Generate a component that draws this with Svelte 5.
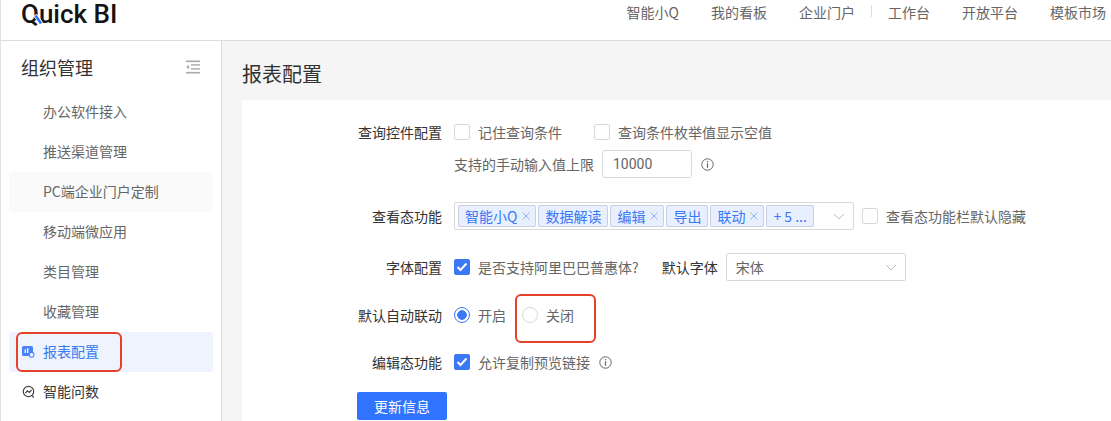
<script lang="ts">
	const topLinks = ['智能小Q', '我的看板', '企业门户', '工作台', '开放平台', '模板市场'];
	const menu = ['办公软件接入', '推送渠道管理', 'PC端企业门户定制', '移动端微应用', '类目管理', '收藏管理'];
	const tags = [
		{ text: '智能小Q', close: true },
		{ text: '数据解读', close: false },
		{ text: '编辑', close: true },
		{ text: '导出', close: false },
		{ text: '联动', close: true },
		{ text: '+ 5 ...', close: false }
	];
</script>

{#snippet info()}
	<svg class="info" width="13" height="13" viewBox="0 0 13 13" fill="none">
		<circle cx="6.5" cy="6.5" r="5.7" stroke="#666" stroke-width="1" />
		<rect x="5.9" y="3" width="1.2" height="1.3" fill="#666" />
		<rect x="5.9" y="5.3" width="1.2" height="4.4" fill="#666" />
	</svg>
{/snippet}

{#snippet chevron()}
	<svg class="chevron" width="12" height="7" viewBox="0 0 12 7" fill="none">
		<path d="M1 1l5 5 5-5" stroke="#bbb" stroke-width="1" />
	</svg>
{/snippet}

{#snippet check()}
	<span class="box on">
		<svg width="12" height="10" viewBox="0 0 12 10" fill="none">
			<path d="M1.5 5l3 3 6-6.5" stroke="#fff" stroke-width="2" />
		</svg>
	</span>
{/snippet}

<div class="page">
	<header class="topbar">
		<div class="logo">
			<span>Quick BI</span>
			<svg class="logo-mark" width="12" height="12" viewBox="0 0 12 12" fill="none">
				<path d="M2 1l6 8" stroke="#fff" stroke-width="4" />
				<path d="M2.5 1.5l5.5 8" stroke="#2f6fff" stroke-width="2.4" />
			</svg>
		</div>
		<nav class="links">
			{#each topLinks as link, i}
				<a class="link" class:split={i === 3} href="#top">{link}</a>
			{/each}
		</nav>
	</header>

	<div class="body">
		<aside class="sidebar">
			<div class="side-head">
				<span>组织管理</span>
				<svg width="14" height="14" viewBox="0 0 14 14" fill="#aaa">
					<rect x="0" y="0.5" width="14" height="1.6" />
					<rect x="5" y="4.2" width="9" height="1.4" />
					<rect x="5" y="8.2" width="9" height="1.4" />
					<rect x="0" y="11.9" width="14" height="1.6" />
					<path d="M0 7l3-2.2v4.4z" />
				</svg>
			</div>
			<ul class="menu">
				{#each menu as item, i}
					<li class="item" class:hover={i === 2}>{item}</li>
				{/each}
				<li class="item active">
					<svg class="item-icon" width="14" height="14" viewBox="0 0 14 14">
						<rect x="0" y="1" width="11" height="10" rx="1.5" fill="#4a84f8" />
						<rect x="2.6" y="4.5" width="1.3" height="3.5" fill="#fff" />
						<rect x="5" y="3.2" width="1.3" height="4.8" fill="#fff" />
						<circle cx="9.6" cy="9.8" r="2.4" fill="#eef3ff" stroke="#4a84f8" stroke-width="1.1" />
					</svg>
					报表配置
				</li>
				<li class="item top">
					<svg class="item-icon" width="14" height="14" viewBox="0 0 14 14" fill="none" stroke="#444" stroke-width="1.2">
						<circle cx="6.5" cy="6.5" r="5.2" />
						<path d="M3.4 8.2l2-2.4 2 1.6 2.2-2.6" />
						<path d="M9.8 10.4l2 2.2" />
					</svg>
					智能问数
				</li>
			</ul>
		</aside>

		<main class="content">
			<h1>报表配置</h1>
			<section class="card">
				<div class="row first">
					<div class="label">查询控件配置</div>
					<div class="field">
						<div class="line">
							<span class="box"></span><span class="opt">记住查询条件</span>
							<span class="box second"></span><span class="opt">查询条件枚举值显示空值</span>
						</div>
						<div class="line limit">
							<span>支持的手动输入值上限</span>
							<span class="input">10000</span>
							{@render info()}
						</div>
					</div>
				</div>

				<div class="row tags-row">
					<div class="label">查看态功能</div>
					<div class="field line">
						<div class="select multi">
							{#each tags as tag}
								<span class="tag">
									{tag.text}
									{#if tag.close}
										<svg class="close" width="8" height="8" viewBox="0 0 8 8" fill="none">
											<path d="M0.5 0.5l7 7M7.5 0.5l-7 7" stroke="#8fb0f5" stroke-width="1" />
										</svg>
									{/if}
								</span>
							{/each}
							{@render chevron()}
						</div>
						<span class="box hide-box"></span><span class="opt">查看态功能栏默认隐藏</span>
					</div>
				</div>

				<div class="row font-row">
					<div class="label">字体配置</div>
					<div class="field line">
						{@render check()}<span class="opt">是否支持阿里巴巴普惠体?</span>
						<span class="font-label">默认字体</span>
						<div class="select font">宋体{@render chevron()}</div>
					</div>
				</div>

				<div class="row radio-row">
					<div class="label">默认自动联动</div>
					<div class="field line">
						<span class="radio on"></span><span class="opt">开启</span>
						<span class="radio off"></span><span class="opt">关闭</span>
					</div>
				</div>

				<div class="row edit-row">
					<div class="label">编辑态功能</div>
					<div class="field line">
						{@render check()}<span class="opt">允许复制预览链接</span>
						{@render info()}
					</div>
				</div>

				<button class="save">更新信息</button>
			</section>
		</main>
	</div>
	<span class="mark radio-mark"></span>
	<span class="mark side-mark"></span>
</div>

<style>
	:global(body) {
		margin: 0;
		overflow: hidden;
	}

	.page {
		position: relative;
		width: 1111px;
		height: 421px;
		overflow: hidden;
		background: #f5f5f5;
		font-family: 'Noto Sans CJK SC', 'Noto Sans', sans-serif;
		font-size: 14px;
		color: #333;
		box-sizing: border-box;
		border-left: 1px solid #e2e2e2;
	}

	.topbar {
		height: 40px;
		background: #fff;
		border-bottom: 1px solid #dcdcdc;
		display: flex;
		align-items: flex-start;
		justify-content: space-between;
	}

	.logo {
		position: relative;
		margin-left: 20px;
		font-family: Roboto, sans-serif;
		font-size: 26px;
		font-weight: 500;
		line-height: 29px;
		color: #141414;
	}

	.logo-mark {
		position: absolute;
		left: 12px;
		top: 14px;
	}

	.links {
		display: flex;
		margin-right: 5px;
		line-height: 24px;
	}

	.link {
		color: #666;
		text-decoration: none;
		margin-left: 32px;
	}

	.split {
		position: relative;
		margin-left: 33px;
	}

	.split::before {
		content: '';
		position: absolute;
		left: -17px;
		top: 5px;
		width: 1px;
		height: 12px;
		background: #ddd;
	}

	.body {
		display: flex;
		height: 380px;
	}

	.sidebar {
		width: 220px;
		flex: none;
		background: #fff;
		border-right: 1px solid #dcdcdc;
	}

	.side-head {
		display: flex;
		align-items: center;
		justify-content: space-between;
		height: 51px;
		padding: 0 21px 0 20px;
		font-size: 18px;
		color: #333;
	}

	.menu {
		list-style: none;
		margin: 0;
		padding: 0 8px;
	}

	.item {
		position: relative;
		height: 40px;
		line-height: 38px;
		padding-left: 34px;
		color: #666;
		border-radius: 4px;
	}

	.hover {
		background: #fafafa;
	}

	.active {
		background: #eff3fe;
		color: #3a78f5;
	}

	.top {
		color: #333;
	}

	.item-icon {
		position: absolute;
		left: 13px;
		top: 13px;
	}

	.content {
		flex: 1;
		padding-left: 20px;
		min-width: 0;
	}

	h1 {
		margin: 0;
		height: 59px;
		line-height: 65px;
		font-size: 20px;
		font-weight: 400;
		color: #333;
	}

	.card {
		background: #fff;
		height: 330px;
		padding-top: 20px;
		box-sizing: border-box;
	}

	.row {
		display: flex;
	}

	.label {
		width: 200px;
		flex: none;
		text-align: right;
		color: #333;
		line-height: 24px;
		margin-right: 12px;
	}

	.line {
		display: flex;
		align-items: center;
		height: 24px;
		color: #666;
	}

	.opt {
		margin-left: 8px;
	}

	.box {
		width: 16px;
		height: 16px;
		flex: none;
		box-sizing: border-box;
		border: 1px solid #d9d9d9;
		border-radius: 2px;
		background: #fff;
		display: flex;
		align-items: center;
		justify-content: center;
	}

	.box.on {
		background: #3a78f5;
		border-color: #3a78f5;
	}

	.second {
		margin-left: 32px;
	}

	.limit {
		height: 28px;
		margin-top: 6px;
	}

	.input {
		width: 90px;
		height: 28px;
		box-sizing: border-box;
		margin-left: 8px;
		padding-left: 10px;
		line-height: 26px;
		border: 1px solid #d9d9d9;
		border-radius: 3px;
		font-family: Roboto, sans-serif;
	}

	.info {
		margin-left: 9px;
	}

	.tags-row {
		margin-top: 24px;
	}

	.tags-row .label {
		line-height: 28px;
	}

	.tags-row .line {
		height: 28px;
	}

	.select {
		position: relative;
		box-sizing: border-box;
		height: 28px;
		border: 1px solid #d9d9d9;
		border-radius: 2px;
		display: flex;
		align-items: center;
		background: #fff;
		color: #666;
	}

	.chevron {
		position: absolute;
		right: 8px;
		top: 10px;
	}

	.multi {
		width: 400px;
		padding-left: 3px;
		gap: 2px;
	}

	.tag {
		display: flex;
		align-items: center;
		height: 22px;
		box-sizing: border-box;
		padding: 0 6px;
		border: 1px solid #c6d0e2;
		border-radius: 2px;
		background: #e8f0ff;
		color: #3a78f5;
		white-space: nowrap;
	}

	.close {
		margin: 0 -1px 0 5px;
	}

	.hide-box {
		margin-left: 8px;
	}

	.font-row {
		margin-top: 25px;
	}

	.font-label {
		margin-left: 23px;
		color: #333;
	}

	.font {
		width: 180px;
		margin-left: 8px;
		padding-left: 9px;
	}

	.radio-row {
		margin-top: 24px;
	}

	.radio {
		width: 16px;
		height: 16px;
		box-sizing: border-box;
		border-radius: 50%;
		border: 1px solid #d9d9d9;
		flex: none;
	}

	.radio.on {
		border-color: #3a78f5;
		background: radial-gradient(circle, #3a78f5 4.5px, #fff 5px);
	}

	.radio.off {
		margin-left: 16px;
	}

	.mark {
		position: absolute;
		box-sizing: border-box;
		border: 2px solid #e5402a;
		border-radius: 6px;
	}

	.radio-mark {
		left: 514px;
		top: 294px;
		width: 81px;
		height: 49px;
	}

	.side-mark {
		left: 15px;
		top: 332px;
		width: 106px;
		height: 40px;
	}

	.edit-row {
		margin-top: 23px;
	}

	.save {
		display: block;
		margin: 18px 0 0 115px;
		width: 90px;
		height: 28px;
		padding: 0;
		border: none;
		border-radius: 2px;
		background: #2f73ff;
		color: #fff;
		font: inherit;
	}
</style>
